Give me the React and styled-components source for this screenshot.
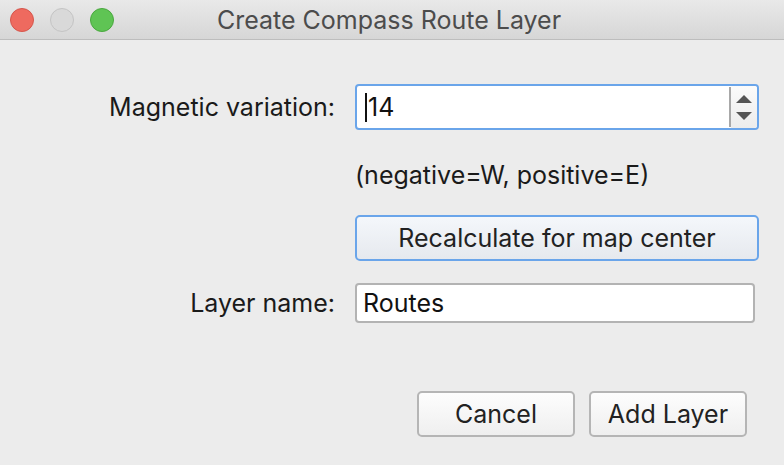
import React from "react";
import styled, { createGlobalStyle } from "styled-components";

const GlobalStyle = createGlobalStyle`
    html, body {
        margin: 0;
        padding: 0;
        background: #ececec;
    }
    body {
        font-family: Inter, "Liberation Sans", sans-serif;
    }
`;

const Window = styled.div`
    width: 784px;
    height: 465px;
    background: #ececec;
    overflow: hidden;
`;

// title bar
const TitleBar = styled.div`
    height: 40px;
    box-sizing: border-box;
    display: flex;
    align-items: center;
    background: linear-gradient(#e9e9e9, #d6d6d6);
    border-bottom: 1px solid #bdbdbd;
    padding-left: 10px;
`;
const Lights = styled.div`
    display: flex;
    gap: 16px;
`;
const Light = styled.span`
    width: 24px;
    height: 24px;
    border-radius: 50%;
    box-sizing: border-box;
    background: ${(p) => p.color};
    border: 1px solid ${(p) => p.edge};
`;
const Title = styled.div`
    flex: 1;
    text-align: center;
    margin-right: 120px;
    font-size: 25px;
    color: #4c4c4c;
    margin-top: 1px;
`;

// form
const Form = styled.div`
    display: grid;
    grid-template-columns: 335px 404px;
    column-gap: 20px;
    padding-top: 44px;
    align-items: center;
`;
const Label = styled.div`
    text-align: right;
    font-size: 25px;
    color: #1a1a1a;
    margin-top: ${(p) => p.top || 0}px;
`;
const Field = styled.div`
    grid-column: 2;
    margin-top: ${(p) => p.top || 0}px;
`;
const Hint = styled.div`
    grid-column: 2;
    font-size: 25px;
    color: #1a1a1a;
    line-height: 26px;
    margin-top: 32px;
`;
const Spinner = styled.div`
    display: flex;
    height: 46px;
    box-sizing: border-box;
    border: 2px solid #6aa5ea;
    border-radius: 4px;
    background: #fff;
`;
const SpinText = styled.div`
    flex: 1;
    display: flex;
    align-items: center;
    padding-left: 8px;
    font-size: 25px;
    color: #111;
    border-right: 2px solid #a8a8a8;
    margin: 1px 0;
`;
const Caret = styled.span`
    width: 2px;
    height: 29px;
    background: #111;
    margin-right: 1px;
`;
const Arrows = styled.div`
    width: 26px;
    display: flex;
    flex-direction: column;
    align-items: center;
    justify-content: center;
    gap: 9px;
    background: linear-gradient(#fbfbfb, #ececec);
    border-radius: 0 3px 3px 0;
`;
const TextInput = styled.div`
    height: 40px;
    width: 400px;
    box-sizing: border-box;
    border: 2px solid #b3b3b3;
    border-radius: 4px;
    background: #fff;
    display: flex;
    align-items: center;
    padding-left: 6px;
    font-size: 25px;
    color: #111;
`;
const Button = styled.div`
    height: 46px;
    width: ${(p) => p.width || "auto"};
    box-sizing: border-box;
    border: 2px solid ${(p) => (p.focused ? "#6aa5ea" : "#b5b5b5")};
    border-radius: 5px;
    background: ${(p) =>
        p.focused
            ? "linear-gradient(#f4f7fb, #e6e9ee)"
            : "linear-gradient(#fdfdfd, #efefef)"};
    display: flex;
    align-items: center;
    justify-content: center;
    font-size: 25px;
    color: #222;
`;
const Footer = styled.div`
    display: flex;
    justify-content: flex-end;
    gap: 14px;
    padding-right: 37px;
    margin-top: 68px;
`;

const App = () => {
    return (
        <Window>
            <GlobalStyle />
            <TitleBar>
                <Lights>
                    <Light color="#ee6a5f" edge="#d5564c" />
                    <Light color="#d9d9d9" edge="#c4c4c4" />
                    <Light color="#5fc454" edge="#4aa83f" />
                </Lights>
                <Title>Create Compass Route Layer</Title>
            </TitleBar>
            <Form>
                <Label>Magnetic variation:</Label>
                <Spinner>
                    <SpinText>
                        <Caret />
                        14
                    </SpinText>
                    <Arrows>
                        <svg width="16" height="8" viewBox="0 0 16 8">
                            <path d="M8 0 L16 8 L0 8 Z" fill="#555" />
                        </svg>
                        <svg width="16" height="8" viewBox="0 0 16 8">
                            <path d="M0 0 L16 0 L8 8 Z" fill="#555" />
                        </svg>
                    </Arrows>
                </Spinner>
                <Hint>(negative=W, positive=E)</Hint>
                <Field top={27}>
                    <Button focused>Recalculate for map center</Button>
                </Field>
                <Label top={22}>Layer name:</Label>
                <Field top={22}>
                    <TextInput>Routes</TextInput>
                </Field>
            </Form>
            <Footer>
                <Button width="158px">Cancel</Button>
                <Button width="158px">Add Layer</Button>
            </Footer>
        </Window>
    );
};

export default App;
